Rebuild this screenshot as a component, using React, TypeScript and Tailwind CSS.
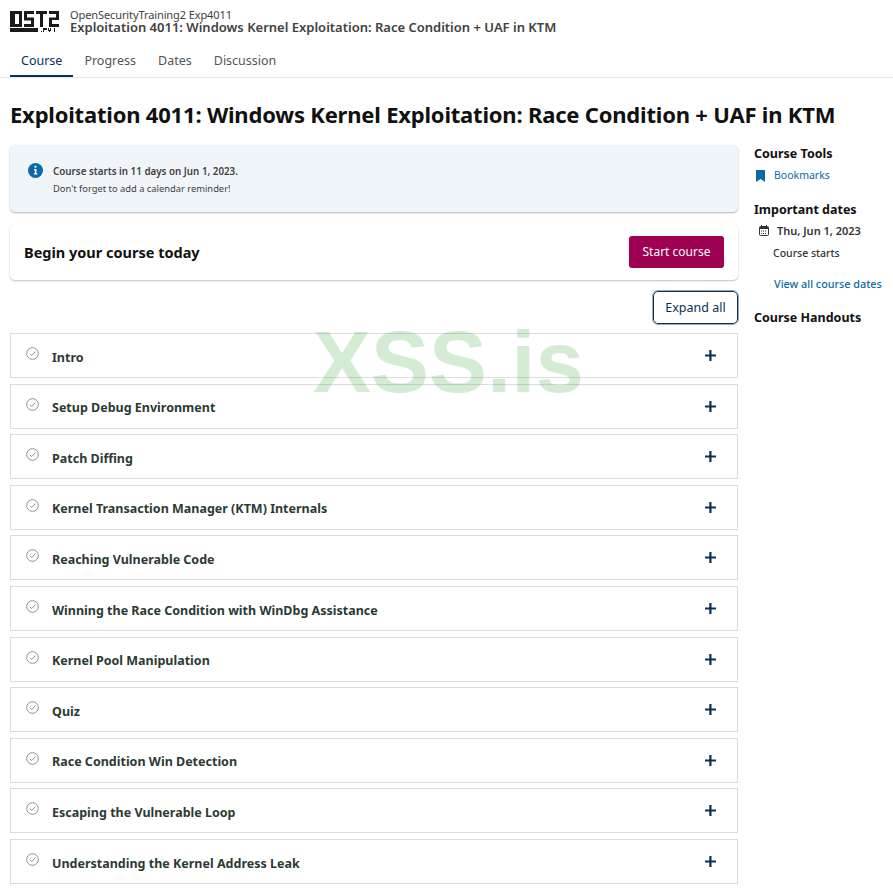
const tabs = ["Course", "Progress", "Dates", "Discussion"];

const sections = [
  "Intro",
  "Setup Debug Environment",
  "Patch Diffing",
  "Kernel Transaction Manager (KTM) Internals",
  "Reaching Vulnerable Code",
  "Winning the Race Condition with WinDbg Assistance",
  "Kernel Pool Manipulation",
  "Quiz",
  "Race Condition Win Detection",
  "Escaping the Vulnerable Loop",
  "Understanding the Kernel Address Leak",
];

function Logo() {
  return (
    <svg width="50" height="21" viewBox="0 0 50 21" className="block mt-[1px]">
      <path fill="#1a1a1a" fillRule="evenodd" d="M0 0h12v16H0zM5 3v10h4V3z" />
      <path fill="#1a1a1a" d="M14 0h10v3h-7v3.500h7V16H14v-3h7V9.500h-7z" />
      <path fill="#1a1a1a" d="M26 0h11v3h-4v13h-3V3h-4z" />
      <path fill="#1a1a1a" d="M39 0h10v9h-7v4h7v3H39V6.500h7V3h-7z" />
      <rect x="0" y="17" width="28" height="4" fill="#1a1a1a" />
      <rect x="31" y="20" width="1" height="1" fill="#1a1a1a" />
      <path fill="#1a1a1a" d="M33 17h4v2h-3v2h-1z" />
      <path fill="#1a1a1a" d="M38 17h1v2h1v-2h1v3h-1v1h-1v-1h-1z" />
      <rect x="44" y="17" width="1" height="4" fill="#1a1a1a" />
    </svg>
  );
}

function InfoIcon() {
  return (
    <svg width="15" height="15" viewBox="0 0 16 16" className="block">
      <circle cx="8" cy="8" r="8" fill="#0a6aa8" />
      <rect x="7" y="3" width="2" height="2" fill="#fff" />
      <path fill="#fff" d="M6.500 6.500H9V11h1v1.200H6.300V11h1V7.700h-.8z" />
    </svg>
  );
}

function CheckCircle() {
  return (
    <svg width="13" height="13" viewBox="0 0 13 13" fill="none" className="block">
      <circle cx="6.500" cy="6.500" r="5.800" stroke="#8f8f8f" strokeWidth="1" />
      <path d="M3.800 6.700l1.900 1.900 3.600-3.900" stroke="#8f8f8f" strokeWidth="1" />
    </svg>
  );
}

function PlusIcon() {
  return (
    <svg width="11" height="11" viewBox="0 0 11 11" className="block">
      <path fill="#0a3055" d="M4.300 0h2.200v4.400H11v2.200H6.500V11H4.300V6.600H0V4.400h4.300z" />
    </svg>
  );
}

function BookmarkIcon() {
  return (
    <svg width="9" height="12" viewBox="0 0 9 12" className="block">
      <path fill="#0a6aa8" d="M0 0h9v12L4.500 9 0 12z" />
    </svg>
  );
}

function CalendarIcon() {
  return (
    <svg width="10" height="11" viewBox="0 0 10 11" fill="none" className="block">
      <rect x="0.500" y="1.500" width="9" height="9" rx="1" stroke="#333" />
      <rect x="1" y="2" width="8" height="2" fill="#333" />
      <rect x="2" y="0" width="1" height="2" fill="#333" />
      <rect x="7" y="0" width="1" height="2" fill="#333" />
      <path stroke="#333" strokeDasharray="1 1" d="M2 6h6M2 8.500h6" />
    </svg>
  );
}

export default function App() {
  return (
    <div className="relative w-[893px] h-[889px] overflow-hidden bg-white text-[#333] font-['Noto_Sans',sans-serif]">
      <header className="border-b border-[#e8e8e8]">
        <div className="flex items-center gap-[10px] pl-[10px] pt-[9px]">
          <Logo />
          <div className="text-[#414141]">
            <div className="text-[11px] leading-[12px] tracking-[-0.1px]">OpenSecurityTraining2 Exp4011</div>
            <div className="text-[13px] leading-[12px] font-semibold">
              Exploitation 4011: Windows Kernel Exploitation: Race Condition + UAF in KTM
            </div>
          </div>
        </div>
        <nav className="flex pl-[10px] mt-[11px]">
          {tabs.map((tab, i) => (
            <a
              key={tab}
              className={
                "px-[11px] h-[33px] flex items-center text-[12.500px] " +
                (i === 0 ? "pt-[4px] border-b-2 border-[#0a3055] text-[#0a3055]" : "pt-[2px] text-[#555]")
              }
            >
              {tab}
            </a>
          ))}
        </nav>
      </header>

      <main className="pl-[10px] pr-[10px]">
        <h1 className="text-[22px] leading-[30px] font-bold text-[#111] mt-[21px] tracking-[-0.2px]">
          Exploitation 4011: Windows Kernel Exploitation: Race Condition + UAF in KTM
        </h1>

        <div className="flex mt-[16px]">
          <div className="w-[728px] shrink-0">
            <div className="flex h-[67px] gap-[10px] rounded-[5px] bg-[#f0f5f9] pl-[18px] pt-[18px] shadow-[0_1px_2px_rgba(0,0,0,0.3)]">
              <InfoIcon />
              <div className="text-[#414141]">
                <div className="text-[9.800px] leading-[18px] font-semibold">Course starts in 11 days on Jun 1, 2023.</div>
                <div className="text-[9.350px] leading-[16px]">Don't forget to add a calendar reminder!</div>
              </div>
            </div>

            <div className="flex h-[56px] items-center justify-between mt-[12px] rounded-[5px] bg-white pl-[14px] pr-[14px] shadow-[0_1px_2px_rgba(0,0,0,0.25)]">
              <h2 className="pt-[2px] text-[14.500px] font-bold text-[#111]">Begin your course today</h2>
              <button className="w-[95px] h-[32px] rounded-[3px] bg-[#a00054] text-[12px] text-white">Start course</button>
            </div>

            <div className="flex justify-end mt-[11px]">
              <button className="w-[85px] h-[33px] pt-[2px] rounded-[5px] border-[1.500px] border-[#0a3055] outline outline-1 outline-[#9aa7b5] text-[12.500px] text-[#0a3055]">
                Expand all
              </button>
            </div>

            <div className="mt-[9px] flex flex-col gap-[5.600px]">
              {sections.map((title) => (
                <div key={title} className="relative h-[45px] border border-[#dcdcdc] flex items-center pl-[41px] pr-[21px] justify-between">
                  <span className="absolute left-[15px] top-[13px]">
                    <CheckCircle />
                  </span>
                  <span className="pt-[5px] text-[12.500px] font-bold text-[#2c3a33]">{title}</span>
                  <PlusIcon />
                </div>
              ))}
            </div>
          </div>

          <aside className="pl-[16px] pt-[0px] text-[#111]">
            <h3 className="text-[12.500px] leading-[17px] font-bold">Course Tools</h3>
            <a className="flex items-center gap-[9px] mt-[5px] pl-[2px] text-[10.500px] leading-[17px] text-[#0a6aa8]">
              <BookmarkIcon />
              Bookmarks
            </a>
            <h3 className="text-[12.500px] leading-[17px] font-bold mt-[17px]">Important dates</h3>
            <div className="flex items-center gap-[8px] mt-[4px] pl-[5px] text-[11px] leading-[17px] font-semibold text-[#333]">
              <CalendarIcon />
              Thu, Jun 1, 2023
            </div>
            <div className="mt-[6px] pl-[19px] text-[10.500px] leading-[17px] font-medium text-[#333]">Course starts</div>
            <a className="block mt-[13px] pl-[20px] text-[10.800px] leading-[17px] font-medium text-[#0a6aa8]">View all course dates</a>
            <h3 className="text-[12.500px] leading-[17px] font-bold mt-[17px]">Course Handouts</h3>
          </aside>
        </div>
      </main>

      {/* watermark sits over the page */}
      <div className="absolute left-[313px] top-[316px] text-[87px] leading-[92px] font-bold text-[#2ca02c] opacity-20 font-['Liberation_Sans',sans-serif] pointer-events-none">
        XSS.is
      </div>
    </div>
  );
}
